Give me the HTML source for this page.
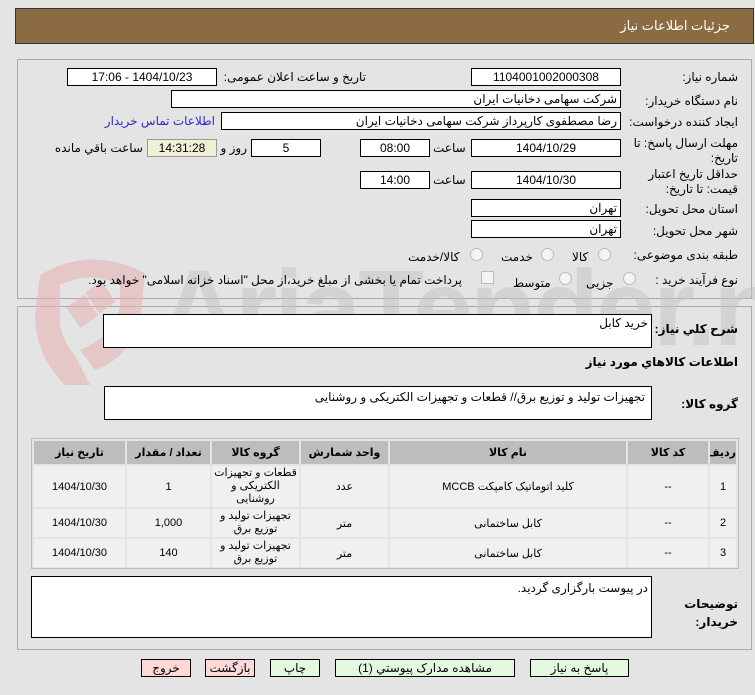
<!DOCTYPE html>
<html><head><meta charset="utf-8">
<style>
body{margin:0;width:755px;height:695px;background:#e4e4e4;font-family:Tahoma,"Liberation Sans","DejaVu Sans",sans-serif;font-size:12px;color:#000;position:relative;overflow:hidden}
.a{position:absolute}
.box{position:absolute;background:#fff;border:1px solid #000;box-sizing:border-box;direction:rtl;padding:0 3px;line-height:16px;white-space:nowrap;overflow:hidden}
.c{text-align:center}
.lb{position:absolute;direction:rtl;white-space:nowrap;text-align:right}
.b{font-weight:bold}
table{border-collapse:separate;border-spacing:2px;direction:rtl;table-layout:fixed}
td,th{font-size:11px;text-align:center;padding:0;overflow:hidden}
th{background:#bdbdbd;height:23px}
td{background:#f0f0f0}
td.g{line-height:13px;font-size:11px}
.btn{position:absolute;top:659px;height:18px;border:1px solid #000;box-sizing:border-box;text-align:center;line-height:16px;direction:rtl}
.rad{position:absolute;width:11px;height:11px;border:1px solid #bbb;border-radius:50%;background:#f4f4f4}
</style></head><body>
<div class="a" style="left:15px;top:8px;width:739px;height:36px;background:#8b6b42;border:1px solid #333;box-sizing:border-box"></div>
<div class="lb" style="right:25px;top:18px;color:#fff;font-size:13px">جزئیات اطلاعات نیاز</div>

<div class="a" style="left:17px;top:59px;width:735px;height:240px;border:1px solid #aaa;box-sizing:border-box"></div>
<div class="a" style="left:17px;top:306px;width:735px;height:344px;border:1px solid #aaa;box-sizing:border-box"></div>

<!-- watermark -->
<div class="a" style="left:0;top:240px;width:755px;height:150px;overflow:hidden">
<svg class="a" style="left:20px;top:5px" width="140" height="140" viewBox="0 0 140 140"><path d="M20 30 Q70 0 125 28 L120 80 Q105 115 75 125 L60 105 Q95 90 100 60 L100 40 Q70 25 40 40 L40 80 Q45 100 55 110 L70 140 L45 140 Q15 110 15 70 Z" fill="#e8b4b4" opacity=".6"/><rect x="50" y="55" width="22" height="25" fill="#e8b4b4" opacity=".6" transform="rotate(-35 60 65)"/><rect x="70" y="40" width="20" height="25" fill="#e8b4b4" opacity=".6" transform="rotate(-35 80 52)"/></svg>
<div class="a" style="left:160px;top:8px;font-family:'Liberation Sans',sans-serif;font-size:108px;font-weight:bold;color:#c4c4c4;opacity:.5;letter-spacing:-3px;line-height:120px;white-space:nowrap">AriaTender.neT</div>
</div>

<div class="lb" style="right:17px;top:70px">شماره نیاز:</div>
<div class="box c" style="left:471px;top:68px;width:150px;height:18px">1104001002000308</div>
<div class="lb" style="right:389px;top:70px">تاریخ و ساعت اعلان عمومی:</div>
<div class="box c" style="left:67px;top:68px;width:150px;height:18px">1404/10/23 - 17:06</div>

<div class="lb" style="right:17px;top:94px">نام دستگاه خریدار:</div>
<div class="box" style="left:171px;top:90px;width:450px;height:18px">شرکت سهامی دخانیات ایران</div>

<div class="lb" style="right:17px;top:115px">ایجاد کننده درخواست:</div>
<div class="box" style="left:221px;top:112px;width:400px;height:18px">رضا مصطفوی کارپرداز شرکت سهامی دخانیات ایران</div>
<div class="lb" style="right:540px;top:114px;color:#2a2ad0">اطلاعات تماس خریدار</div>

<div class="lb" style="right:17px;top:136px;line-height:15px">مهلت ارسال پاسخ: تا<br>تاریخ:</div>
<div class="box c" style="left:471px;top:139px;width:150px;height:18px">1404/10/29</div>
<div class="lb" style="left:433px;top:141px">ساعت</div>
<div class="box c" style="left:360px;top:139px;width:70px;height:18px">08:00</div>
<div class="box c" style="left:251px;top:139px;width:70px;height:18px">5</div>
<div class="lb" style="right:508px;top:141px">روز و</div>
<div class="box c" style="left:147px;top:139px;width:70px;height:18px;background:#f0f0d4;border-color:#999">14:31:28</div>
<div class="lb" style="right:612px;top:141px">ساعت باقي مانده</div>

<div class="lb" style="right:17px;top:167px;line-height:15px">حداقل تاریخ اعتبار<br>قیمت: تا تاریخ:</div>
<div class="box c" style="left:471px;top:171px;width:150px;height:18px">1404/10/30</div>
<div class="lb" style="left:433px;top:173px">ساعت</div>
<div class="box c" style="left:360px;top:171px;width:70px;height:18px">14:00</div>

<div class="lb" style="right:17px;top:202px">استان محل تحویل:</div>
<div class="box" style="left:471px;top:199px;width:150px;height:18px">تهران</div>
<div class="lb" style="right:17px;top:224px">شهر محل تحویل:</div>
<div class="box" style="left:471px;top:220px;width:150px;height:18px">تهران</div>

<div class="lb" style="right:17px;top:248px">طبقه بندی موضوعی:</div>
<div class="rad" style="left:598px;top:248px"></div><div class="lb" style="left:572px;top:250px">کالا</div>
<div class="rad" style="left:541px;top:248px"></div><div class="lb" style="left:501px;top:250px">خدمت</div>
<div class="rad" style="left:470px;top:248px"></div><div class="lb" style="left:408px;top:250px">کالا/خدمت</div>

<div class="lb" style="right:17px;top:273px">نوع فرآیند خرید :</div>
<div class="rad" style="left:623px;top:272px"></div><div class="lb" style="left:586px;top:276px">جزیی</div>
<div class="rad" style="left:559px;top:272px"></div><div class="lb" style="left:513px;top:276px">متوسط</div>
<div class="a" style="left:481px;top:271px;width:11px;height:11px;border:1px solid #bbb;background:#f4f4f4"></div>
<div class="lb" style="right:293px;top:273px">پرداخت تمام یا بخشی از مبلغ خرید،از محل "اسناد خزانه اسلامی" خواهد بود.</div>

<div class="lb b" style="right:17px;top:322px">شرح كلي نياز:</div>
<div class="box" style="left:103px;top:314px;width:549px;height:34px">خرید کابل</div>
<div class="lb b" style="right:17px;top:355px">اطلاعات كالاهاي مورد نياز</div>
<div class="lb b" style="right:17px;top:397px">گروه کالا:</div>
<div class="box" style="left:104px;top:386px;width:548px;height:34px;padding-right:6px;line-height:20px">تجهیزات تولید و توزیع برق// قطعات و تجهیزات الکتریکی و روشنایی</div>

<div class="a" style="left:31px;top:438px;width:708px;height:131px;border:1px solid #bbb;box-sizing:border-box"></div>
<table class="a" style="left:32px;top:439px;width:706px">
<colgroup><col style="width:26px"><col style="width:80px"><col style="width:236px"><col style="width:87px"><col style="width:87px"><col style="width:83px"><col></colgroup>
<tr><th>ردیف</th><th>کد کالا</th><th>نام کالا</th><th>واحد شمارش</th><th>گروه کالا</th><th>تعداد / مقدار</th><th>تاریخ نیاز</th></tr>
<tr style="height:41px"><td>1</td><td>--</td><td>کلید اتوماتیک کامپکت MCCB</td><td>عدد</td><td class="g">قطعات و تجهیزات الکتریکی و روشنایی</td><td>1</td><td>1404/10/30</td></tr>
<tr style="height:28px"><td>2</td><td>--</td><td>کابل ساختمانی</td><td>متر</td><td class="g">تجهیزات تولید و توزیع برق</td><td>1,000</td><td>1404/10/30</td></tr>
<tr style="height:28px"><td>3</td><td>--</td><td>کابل ساختمانی</td><td>متر</td><td class="g">تجهیزات تولید و توزیع برق</td><td>140</td><td>1404/10/30</td></tr>
</table>

<div class="lb b" style="right:17px;top:595px;line-height:18px">توضیحات<br>خریدار:</div>
<div class="box" style="left:31px;top:576px;width:621px;height:62px;line-height:22px">در پیوست بارگزاری گردید.</div>

<div class="btn" style="left:530px;width:99px;background:#e4f8e0">پاسخ به نیاز</div>
<div class="btn" style="left:335px;width:180px;background:#e4f8e0">مشاهده مدارک پیوستي (1)</div>
<div class="btn" style="left:270px;width:50px;background:#e4f8e0">چاپ</div>
<div class="btn" style="left:205px;width:50px;background:#fcd8d8">بازگشت</div>
<div class="btn" style="left:141px;width:50px;background:#fcd8d8">خروج</div>
</body></html>
